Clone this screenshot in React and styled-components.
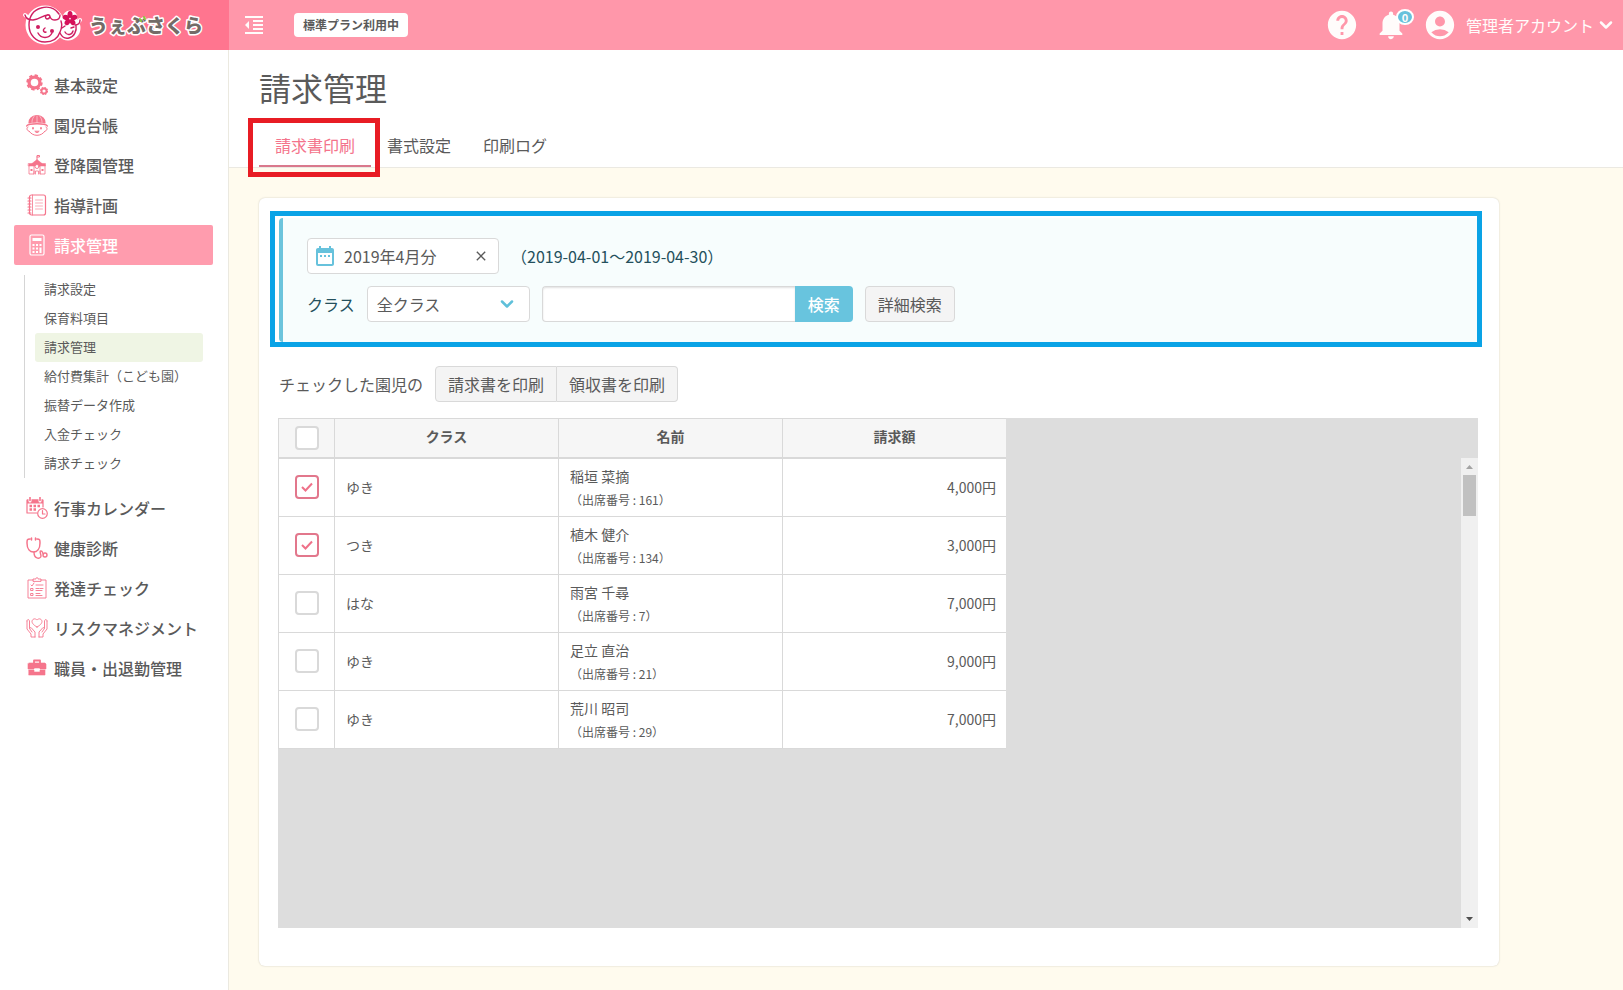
import React, { useState } from 'react'
import styled, { createGlobalStyle, css } from 'styled-components';
import { ChevronDown } from 'lucide-react';
import {
   MdAccountCircle,
   MdClose,
   MdDateRange,
   MdFormatIndentDecrease,
   MdHelp,
   MdNotifications
} from 'react-icons/md';


const GlobalStyle = createGlobalStyle`
*{
  box-sizing:border-box;
}
body{
  margin:0;
  color:#5a5a5a;
  background:#fffbee;
  font-family:"Noto Sans CJK JP", "Noto Sans", sans-serif;
  font-size:16px;
}
button, input, select{
  font:inherit;
  color:inherit;
}
a{
  color:inherit;
  text-decoration:none;
}
`
const Page = styled.div`
display:flex;
flex-direction:column;
min-height:100vh;
`
const TopBar = styled.header`
display:flex;
height:50px;
color:#fff;
background:#ff97aa;
`
const Brand = styled.a`
display:flex;
align-items:center;
width:229px;
padding-left:21px;
background:#ff758f;
`
const IconButton = styled.button`
display:flex;
align-items:center;
justify-content:center;
padding:0;
border:0;
color:#fffcfb;
background:none;
cursor:pointer;
position:relative;
`
const MenuButton = styled(IconButton)`
width:50px;
`
const PlanBadge = styled.span`
align-self:center;
margin-left:15px;
padding:0 9px;
border-radius:4px;
line-height:24px;
font-size:12px;
font-weight:700;
color:#5a5a5a;
background:#fff;
`
const TopActions = styled.div`
display:flex;
align-items:center;
gap:15px;
margin-left:auto;
padding-right:7px;
`
const CountBadge = styled.span`
display:flex;
align-items:center;
justify-content:center;
width:18px;
height:16px;
border:2px solid #fff;
border-radius:50%;
font-size:11px;
font-weight:700;
line-height:1;
background:#67c2dc;
position:absolute;
top:1px;
left:22px;
`
const AccountButton = styled(IconButton)`
gap:2px;
`
const AccountName = styled.span`
padding-left:7px;
`
const Body = styled.div`
display:flex;
flex:1;
`
const Sidebar = styled.nav`
width:229px;
flex-shrink:0;
padding:15px 15px 15px 14px;
border-right:1px solid #ebe9e0;
background:#fff;
`
const NavLink = styled.a`
display:flex;
align-items:center;
gap:6px;
height:40px;
padding-left:12px;
border-radius:2px;
font-weight:500;
svg{
  color:#f5758c;
}
${props => props.$active && css`
  color:#fff;
  background:#ff9cae;
  svg{
    color:#fff;
  }
`}
`
const SubNav = styled.div`
margin:10px 10px;
padding-left:10px;
border-left:1px solid #d5d5d5;
`
const SubLink = styled.a`
display:block;
padding:0 0 2px 9px;
border-radius:3px;
line-height:27px;
font-size:13px;
background:${props => props.$active ? "#eff5e4" : "none"};
`
const Main = styled.main`
flex:1;
min-width:0;
`
const PageHead = styled.div`
padding:13px 30px 0;
border-bottom:1px solid #ebe9e2;
background:#fff;
`
const Title = styled.h1`
margin:0 0 15px;
font-size:32px;
font-weight:400;
line-height:48px;
`
const Tabs = styled.div`
display:flex;
`
const TabBox = styled.div`
position:relative;
`
const Tab = styled.a`
display:block;
padding:0 16px;
border-bottom:2px solid transparent;
line-height:39px;
${props => props.$active && css`
  color:#f4738b;
  border-color:#d9788c;
`}
`
// 操作説明用の囲み枠
const Marker = styled.div`
border:5px solid ${props => props.$color};
pointer-events:none;
position:absolute;
inset:${props => props.$inset};
`
const Content = styled.div`
padding:30px 30px 24px;
`
const Card = styled.section`
max-width:1240px;
padding:20px 21px 38px 19px;
border-radius:6px;
background:#fff;
box-shadow:0 0 2px rgba(0, 0, 0, 0.2);
`
const SearchPanel = styled.form`
display:flex;
flex-direction:column;
gap:12px;
margin-left:1px;
padding:20px 24px;
border-left:4px solid #6cc4dc;
border-radius:4px;
color:#24505c;
background:#f7fdfd;
position:relative;
`
const Line = styled.div`
display:flex;
align-items:center;
gap:12px;
`
const fieldStyle = css`
height:36px;
border:1px solid #d9d9d9;
border-radius:4px;
color:#5a5a5a;
background:#fff;
`
const MonthField = styled.div`
${fieldStyle}
display:flex;
align-items:center;
gap:7px;
width:192px;
padding:0 9px 0 5px;
svg{
  flex-shrink:0;
}
`
const MonthInput = styled.input`
flex:1;
min-width:0;
padding:0;
border:0;
outline:0;
background:none;
`
const ClearButton = styled(IconButton)`
color:#5a5a5a;
`
const SelectBox = styled.div`
display:flex;
align-items:center;
position:relative;
svg{
  color:#5fc0da;
  pointer-events:none;
  position:absolute;
  right:13px;
}
`
const ClassSelect = styled.select`
${fieldStyle}
width:163px;
padding:0 9px;
appearance:none;
`
const SearchGroup = styled.div`
display:flex;
`
const SearchInput = styled.input`
${fieldStyle}
width:253px;
padding:0 10px;
border-right:0;
border-radius:4px 0 0 4px;
box-shadow:inset 0 1px 2px rgba(0, 0, 0, 0.12);
`
const SearchButton = styled.button`
height:36px;
padding:0 13px;
border:0;
border-radius:0 4px 4px 0;
font-weight:500;
color:#fff;
background:#68c4de;
`
const Button = styled.button`
height:36px;
padding:0 12px;
border:1px solid #d9d9d9;
border-radius:4px;
color:#5a5a5a;
background:#f4f4f4;
`
const PrintLine = styled(Line)`
margin:24px 0 16px;
padding-left:1px;
`
const ButtonGroup = styled.div`
display:flex;
${Button}:first-child{
  border-radius:4px 0 0 4px;
}
${Button} + ${Button}{
  border-left:0;
  border-radius:0 4px 4px 0;
}
`
const Grid = styled.div`
display:flex;
justify-content:space-between;
min-height:510px;
background:#ddd;
`
const Table = styled.table`
align-self:flex-start;
table-layout:fixed;
width:728px;
border-collapse:separate;
border-spacing:0;
font-size:14px;
background:#fff;
`
const HeadCell = styled.th`
width:${props => props.$narrow ? "56px" : "224px"};
height:41px;
padding:${props => props.$narrow ? "0" : "0 0 4px"};
border:solid #d9d9d9;
border-width:1px 0 2px 1px;
font-weight:700;
line-height:20px;
background:#f6f6f6;
`
const Cell = styled.td`
height:58px;
padding:0 10px 0 11px;
border:solid #d9d9d9;
border-width:0 0 1px 1px;
line-height:23px;
text-align:${props => props.$align || "left"};
&:first-child{
  padding-bottom:2px;
}
`
const Small = styled.div`
font-size:12px;
`
const Check = styled.input`
display:block;
width:24px;
height:24px;
margin:0 auto;
border:2px solid #d9d9d9;
border-radius:4px;
appearance:none;
background:#fff;
&:checked{
  border-color:#e2778c;
}
`
const CheckBox = styled.label`
display:grid;
justify-content:center;
align-items:center;
> *{
  grid-area:1 / 1;
}
svg{
  margin:0 auto;
  color:#ef7189;
  pointer-events:none;
  z-index:1;
}
`
const ScrollBar = styled.div`
display:flex;
flex-direction:column;
align-items:center;
width:17px;
margin-top:40px;
background:#f0f0f0;
`
const Thumb = styled.div`
width:13px;
height:41px;
margin-bottom:auto;
background:#c1c1c1;
`

const Logo = () => (
   <svg width="190" height="46" viewBox="0 0 190 46" role="img" aria-label="うぇぶさくら">
      <g fill="#fff" stroke="#fff" strokeWidth="3">
         <circle cx="24" cy="23" r="18" />
         <circle cx="47" cy="26" r="11" />
         <path d="M4 13l6 5M59 18l-4 4" strokeWidth="4" strokeLinecap="round" />
         <circle cx="49" cy="16" r="6" />
      </g>
      <g fill="none" stroke="#cf1f62" strokeWidth="1.400" strokeLinecap="round" strokeLinejoin="round">
         <path d="M38 12C34 6 27 4 20 6 12 8 8 15 8 23c0 10 7 17 16 17 8 0 13-4 15-10 2-4 2-8 1-11" />
         <path d="M4 13c1 4 4 5 8 5 8-1 10-5 15-5 3 0 2 4-1 4-3-1-1-5 2-4 2 1 0 5 6 5 3 0 5-2 5-5" />
         <path d="M39 31c2 4 5 6 9 5 5-1 8-7 7-13M59 18c0 3-2 5-5 5" />
         <path d="M17 31c3 6 11 6 14 0M24 26c-3 2-1 5 1 4" />
         <path d="M44 30c2 4 7 3 8-1M41 26l3-2M50 26l3-1" />
      </g>
      <circle cx="17" cy="25" r="2" fill="#cf1f62" />
      <circle cx="31" cy="29" r="2" fill="#cf1f62" />
      <g fill="#d6125a">
         <ellipse cx="49" cy="12.500" rx="2.500" ry="3.500" />
         <ellipse cx="53" cy="15.500" rx="3.500" ry="2.500" transform="rotate(-18 53 15.500)" />
         <ellipse cx="51.500" cy="20" rx="2.500" ry="3.500" transform="rotate(-36 51.500 20)" />
         <ellipse cx="46.500" cy="20" rx="2.500" ry="3.500" transform="rotate(36 46.500 20)" />
         <ellipse cx="45" cy="15.500" rx="3.500" ry="2.500" transform="rotate(18 45 15.500)" />
      </g>
      <text x="68" y="31" fontSize="19" fontWeight="900" fill="#746b67" stroke="#fff" strokeWidth="3" strokeLinejoin="round" paintOrder="stroke">うぇぶさくら</text>
      <path d="M119 17l1 2M123 15l1 2" stroke="#8cc63f" strokeWidth="2" strokeLinecap="round" />
   </svg>
)

const NavIcon = ({ children }) => (
   <svg width="22" height="22" viewBox="0 0 22 22" fill="none" stroke="currentColor" strokeWidth="1.2" strokeLinecap="round" strokeLinejoin="round" aria-hidden="true">
      {children}
   </svg>
)

const icons = {
   gear: <>
      <circle cx="8.500" cy="8.500" r="5.400" strokeWidth="3.200" />
      <circle cx="8.500" cy="8.500" r="7.200" strokeWidth="2" strokeDasharray="3.200 2.450" strokeLinecap="butt" />
      <circle cx="18" cy="17" r="2.500" strokeWidth="1.800" />
      <circle cx="18" cy="17" r="3.500" strokeWidth="1.200" strokeDasharray="1.600 1.150" strokeLinecap="butt" />
   </>,
   child: <>
      <path d="M3 9C3 5 6 2 11 1.500c5 .500 8 3.500 8 7.500-5-1.500-11-1.500-16 0z" fill="currentColor" />
      <path d="M11 2v6M8 2.500C6 5 6 7 6 8.500M14 2.500c2 2.500 2 4.500 2 6" stroke="#fff" strokeWidth=".500" />
      <path d="M.700 12C2 9 20 9 21.300 12" strokeWidth="1.500" />
      <path d="M2 13c-2 .500-1 4 1 4 2 3 5 4.300 8 4.300s6-1.300 8-4.300c2 0 3-3.500 1-4" strokeWidth="1" />
      <path d="M9 17.500c1 1.500 3 1.500 4 0z" fill="currentColor" strokeWidth=".800" />
      <path d="M7 14v.500M15 14v.500" strokeWidth="1.800" />
   </>,
   school: <>
      <path d="M11 6V1.500h2.500v1.500H11" strokeWidth="1" />
      <path d="M6 9.500L11 5.500l5 4zM2.500 9.500h17V12h-17z" fill="currentColor" strokeWidth=".500" />
      <path d="M3 12v8h5v-8M19 12v8h-5v-8M8 20v-3M14 20v-3" strokeWidth=".800" />
      <path d="M5.500 15v2M16.500 15v2" strokeWidth="2" strokeLinecap="butt" />
      <path d="M9.500 20v-3h3v3" strokeWidth=".800" />
      <circle cx="11" cy="12.500" r="2" fill="#fff" strokeWidth=".900" />
   </>,
   note: <>
      <rect x="3.500" y="1" width="16" height="20" rx="2" />
      <path d="M6.500 1v20" strokeWidth=".800" />
      <path d="M2 4h3M2 7h3M2 10h3M2 13h3M2 16h3M2 19h3" />
      <path d="M9.500 6h7M9.500 9h7M9.500 12h7M9.500 15h7" strokeWidth=".600" />
   </>,
   calc: <>
      <rect x="4" y="1" width="14" height="20" rx="1.500" />
      <path d="M6.500 5.500h9" strokeWidth="3" strokeLinecap="butt" />
      <path d="M6.500 11h2M10 11h2M13.500 11h2M6.500 14.500h2M10 14.500h2M6.500 18h2M10 18h2" strokeWidth="2" strokeLinecap="butt" />
      <path d="M14.500 13.500V19" strokeWidth="2" strokeLinecap="butt" />
   </>,
   calendar: <>
      <path d="M11 16H1V3h16v7" />
      <path d="M1 4.500h16" strokeWidth="4" strokeLinecap="butt" />
      <path d="M4 1v3M14 1v3" stroke="#fff" strokeWidth="3" />
      <path d="M4 .500v3M14 .500v3" strokeWidth="1.600" />
      <path d="M3.500 9H6M7.500 9H10M11.500 9H14M3.500 12.500H6M7.500 12.500H10" strokeWidth="2.400" strokeLinecap="butt" />
      <circle cx="16.500" cy="16.500" r="4.800" fill="#fff" />
      <path d="M16.500 13.500v3.500h2.500" />
   </>,
   stetho: <>
      <path d="M4 2C1 2 1 3 1 6c0 6 3 9 6.500 9S14 12 14 6c0-3 0-4-3-4M5.500 1v2M9.500 1v2" strokeWidth="1.500" />
      <path d="M8 15c0 8 7 7 7 4 0-2-2-5 0-5s1 2 2.500 3" strokeWidth="1.400" />
      <circle cx="19" cy="18" r="2" strokeWidth="1.400" />
   </>,
   clipboard: <g strokeWidth=".9">
      <path d="M7 3H2v18h18V3h-5" />
      <path d="M7 4V2h3c0-2 2-2 2 0h3v2z" />
      <path d="M5 8l1 1 2-3M10 8h7M5 11.500h2v2H5zM10 11.500h3M14 11.500h3M10 13.500h6M5 16.500h2v2H5zM10 16.500h4M10 18.500h6" />
   </g>,
   hands: <g strokeWidth=".9">
      <path d="M11 10C7 8 5 5 6.500 3c1.500-2 3.500-1 4.500 0 1-1 3-2 4.500 0C17 5 15 8 11 10z" />
      <path d="M9 20v-5l-4-4.500-1.500 1L6 15M1 4v8l4 5v3h4M1 4c0-2 2-2 2.500 0v7M13 20v-5l4-4.500 1.500 1L16 15M21 4v8l-4 5v3h-4M21 4c0-2-2-2-2.500 0v7" />
   </g>,
   bag: <>
      <path d="M8 6V3.500h6V6" strokeWidth="1.800" />
      <path d="M3 6h16l1 1v5h-6v-1H8v1H2V7zM3 13h5v2h6v-2h5v5H3z" fill="currentColor" strokeWidth=".6" />
   </>
}

const navBefore = [
   { icon: "gear", label: "基本設定" },
   { icon: "child", label: "園児台帳" },
   { icon: "school", label: "登降園管理" },
   { icon: "note", label: "指導計画" },
   { icon: "calc", label: "請求管理", active: true },
]
const subNav = ["請求設定", "保育料項目", "請求管理", "給付費集計（こども園）", "振替データ作成", "入金チェック", "請求チェック"]
const navAfter = [
   { icon: "calendar", label: "行事カレンダー" },
   { icon: "stetho", label: "健康診断" },
   { icon: "clipboard", label: "発達チェック" },
   { icon: "hands", label: "リスクマネジメント" },
   { icon: "bag", label: "職員・出退勤管理" },
]
const children = [
   { no: 161, name: "稲垣 菜摘", group: "ゆき", amount: "4,000円" },
   { no: 134, name: "植木 健介", group: "つき", amount: "3,000円" },
   { no: 7, name: "雨宮 千尋", group: "はな", amount: "7,000円" },
   { no: 21, name: "足立 直治", group: "ゆき", amount: "9,000円" },
   { no: 29, name: "荒川 昭司", group: "ゆき", amount: "7,000円" },
]

const NavList = ({ items }) => items.map(item => (
   <NavLink key={item.label} href="#" $active={item.active}>
      <NavIcon>{icons[item.icon]}</NavIcon>
      {item.label}
   </NavLink>
))

const RowCheck = ({ label, checked, onChange }) => (
   <CheckBox>
      <Check type="checkbox" aria-label={label} checked={checked} onChange={onChange} />
      {checked &&
         <svg width="12" height="10" viewBox="0 0 12 10" fill="none" stroke="currentColor" strokeWidth="2">
            <path d="M1 5l3.500 3.500L11 1.500" />
         </svg>}
   </CheckBox>
)

const App = () => {
   const [checked, setChecked] = useState([161, 134]);
   const [month, setMonth] = useState("2019年4月分");

   const toggle = (no) => {
      setChecked(checked.includes(no) ? checked.filter(n => n !== no) : [...checked, no]);
   }
   const allChecked = checked.length === children.length;
   const toggleAll = () => {
      setChecked(allChecked ? [] : children.map(c => c.no));
   }

   return (
      <Page>
         <GlobalStyle />
         <TopBar>
            <Brand href="#"><Logo /></Brand>
            <MenuButton aria-label="メニュー"><MdFormatIndentDecrease size={24} /></MenuButton>
            <PlanBadge>標準プラン利用中</PlanBadge>
            <TopActions>
               <IconButton aria-label="ヘルプ"><MdHelp size={34} /></IconButton>
               <IconButton aria-label="お知らせ">
                  <MdNotifications size={34} />
                  <CountBadge>0</CountBadge>
               </IconButton>
               <AccountButton>
                  <MdAccountCircle size={34} />
                  <AccountName>管理者アカウント</AccountName>
                  <ChevronDown size={20} strokeWidth={3} />
               </AccountButton>
            </TopActions>
         </TopBar>
         <Body>
            <Sidebar>
               <NavList items={navBefore} />
               <SubNav>
                  {subNav.map((label, i) => (
                     <SubLink key={label} href="#" $active={i === 2}>{label}</SubLink>
                  ))}
               </SubNav>
               <NavList items={navAfter} />
            </Sidebar>
            <Main>
               <PageHead>
                  <Title>請求管理</Title>
                  <Tabs>
                     <TabBox>
                        <Tab href="#" $active>請求書印刷</Tab>
                        <Marker $color="#e81c24" $inset="-8px -9px -10px -11px" />
                     </TabBox>
                     <Tab href="#">書式設定</Tab>
                     <Tab href="#">印刷ログ</Tab>
                  </Tabs>
               </PageHead>
               <Content>
                  <Card>
                     <SearchPanel onSubmit={e => e.preventDefault()}>
                        <Line>
                           <MonthField>
                              <MdDateRange size={24} color="#67c2dc" />
                              <MonthInput aria-label="対象月" value={month} onChange={e => setMonth(e.target.value)} />
                              <ClearButton type="button" aria-label="クリア" onClick={() => setMonth("")}>
                                 <MdClose size={16} />
                              </ClearButton>
                           </MonthField>
                           <span>（2019-04-01〜2019-04-30）</span>
                        </Line>
                        <Line>
                           <label htmlFor="group">クラス</label>
                           <SelectBox>
                              <ClassSelect id="group"><option>全クラス</option></ClassSelect>
                              <ChevronDown size={20} strokeWidth={3} />
                           </SelectBox>
                           <SearchGroup>
                              <SearchInput type="text" aria-label="検索キーワード" />
                              <SearchButton>検索</SearchButton>
                           </SearchGroup>
                           <Button type="button">詳細検索</Button>
                        </Line>
                        <Marker $color="#0aa3e6" $inset="-7px -4px -5px -13px" />
                     </SearchPanel>
                     <PrintLine>
                        <span>チェックした園児の</span>
                        <ButtonGroup>
                           <Button>請求書を印刷</Button>
                           <Button>領収書を印刷</Button>
                        </ButtonGroup>
                     </PrintLine>
                     <Grid>
                        <Table>
                           <thead>
                              <tr>
                                 <HeadCell $narrow>
                                    <RowCheck label="すべて選択" checked={allChecked} onChange={toggleAll} />
                                 </HeadCell>
                                 <HeadCell>クラス</HeadCell>
                                 <HeadCell>名前</HeadCell>
                                 <HeadCell>請求額</HeadCell>
                              </tr>
                           </thead>
                           <tbody>
                              {children.map(child => (
                                 <tr key={child.no}>
                                    <Cell>
                                       <RowCheck label={child.name} checked={checked.includes(child.no)} onChange={() => toggle(child.no)} />
                                    </Cell>
                                    <Cell>{child.group}</Cell>
                                    <Cell>
                                       {child.name}
                                       <Small>（出席番号 : {child.no}）</Small>
                                    </Cell>
                                    <Cell $align="right">{child.amount}</Cell>
                                 </tr>
                              ))}
                           </tbody>
                        </Table>
                        <ScrollBar>
                           <svg width="17" height="17" fill="#a3a3a3"><path d="M5 11l3.500-4 3.500 4z" /></svg>
                           <Thumb />
                           <svg width="17" height="17" fill="#505050"><path d="M5 6l3.500 4L12 6z" /></svg>
                        </ScrollBar>
                     </Grid>
                  </Card>
               </Content>
            </Main>
         </Body>
      </Page>
   )
}

export default App
